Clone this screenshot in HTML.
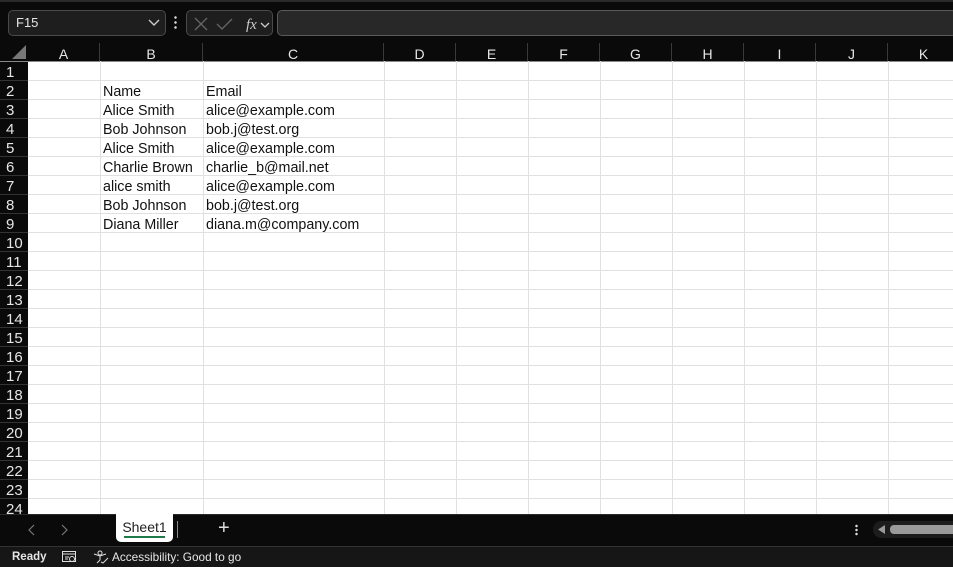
<!DOCTYPE html>
<html><head><meta charset="utf-8"><style>
*{margin:0;padding:0;box-sizing:border-box}
body{width:953px;height:567px;overflow:hidden;background:#0a0a0a;font-family:"Liberation Sans",sans-serif;position:relative}
.abs{position:absolute}
.hl{position:absolute;left:28px;width:925px;height:1px;background:#e0e0e0}
.vl{position:absolute;top:61px;height:453px;width:1px;background:#e0e0e0}
.ch{position:absolute;top:43px;height:18px;color:#e6e6e6;font-size:14px;text-align:center;line-height:22px;border-right:1px solid #3a3a3a}
.rh{position:absolute;left:0;width:28px;height:19px;color:#e6e6e6;font-size:15px;line-height:21px;padding-left:6px;border-bottom:1px solid #333}
.c{position:absolute;font-size:14.3px;color:#111;line-height:19px;white-space:nowrap}
</style></head><body>
<div class="abs" style="left:0;top:0;width:953px;height:2px;background:#2a2a2a"></div>
<div class="abs" style="left:8px;top:10px;width:158px;height:26px;border:1px solid #4a4a4a;border-radius:5px;background:#1e1e1e;color:#e6e6e6;font-size:13px;line-height:24px;padding-left:7px">F15
<svg class="abs" style="left:139px;top:8px" width="12" height="8"><path d="M1 1l5 5 5-5" stroke="#ccc" fill="none" stroke-width="1.4"/></svg></div>
<div class="abs" style="left:174px;top:15px;width:3px;height:14px;background:radial-gradient(circle,#ddd 1px,transparent 1.5px) 0 0/3px 5px"></div>
<div class="abs" style="left:186px;top:10px;width:87px;height:26px;border:1px solid #4a4a4a;border-radius:5px;background:#1e1e1e">
<svg class="abs" style="left:6px;top:5px" width="80" height="16"><path d="M2 2l12 12M14 2L2 14" stroke="#666" stroke-width="1.3"/><path d="M24 8l5 5 10-10" stroke="#666" fill="none" stroke-width="1.3"/><text x="53" y="13" fill="#ccc" font-family="Liberation Serif" font-style="italic" font-size="15">fx</text><path d="M68 7l4 4 4-4" stroke="#ccc" fill="none" stroke-width="1.3"/></svg></div>
<div class="abs" style="left:277px;top:10px;width:680px;height:26px;border:1px solid #5a5a5a;border-radius:5px;background:#282828"></div>
<svg class="abs" style="left:12px;top:45px" width="14" height="14"><path d="M14 0V14H0Z" fill="#777"/></svg>
<div class="abs" style="left:0;top:61px;width:953px;height:1px;background:#888"></div>
<div class="ch" style="left:28px;width:72px">A</div>
<div class="ch" style="left:100px;width:103px">B</div>
<div class="ch" style="left:203px;width:181px">C</div>
<div class="ch" style="left:384px;width:72px">D</div>
<div class="ch" style="left:456px;width:72px">E</div>
<div class="ch" style="left:528px;width:72px">F</div>
<div class="ch" style="left:600px;width:72px">G</div>
<div class="ch" style="left:672px;width:72px">H</div>
<div class="ch" style="left:744px;width:72px">I</div>
<div class="ch" style="left:816px;width:72px">J</div>
<div class="ch" style="left:888px;width:72px">K</div>
<div class="abs" style="left:28px;top:62px;width:925px;height:452px;background:#fff"></div>
<div id="lines"></div>
<script>
var h='';
for(var i=1;i<=24;i++){var y=61+i*19;h+='<div class="hl" style="top:'+(y)+'px"></div>';
h+='<div class="rh" style="top:'+(y-19+1)+'px">'+i+'</div>';}
[100,203,384,456,528,600,672,744,816,888].forEach(function(x){h+='<div class="vl" style="left:'+x+'px"></div>'});
var d=[["Name","Email"],["Alice Smith","alice@example.com"],["Bob Johnson","bob.j@test.org"],["Alice Smith","alice@example.com"],["Charlie Brown","charlie_b@mail.net"],["alice smith","alice@example.com"],["Bob Johnson","bob.j@test.org"],["Diana Miller","diana.m@company.com"]];
d.forEach(function(r,k){var y=83+k*19;h+='<div class="c" style="left:103px;top:'+y+'px">'+r[0]+'</div><div class="c" style="left:206px;top:'+y+'px">'+r[1]+'</div>'});
document.getElementById('lines').innerHTML=h;
</script>
<div class="abs" style="left:0;top:514px;width:953px;height:32px;background:#0a0a0a;border-top:1px solid #2a2a2a"></div>
<svg class="abs" style="left:27px;top:523px" width="45" height="14"><path d="M7 2L2 7l5 5" stroke="#777" fill="none" stroke-width="1.2"/><path d="M35 2l5 5-5 5" stroke="#777" fill="none" stroke-width="1.2"/></svg>
<div class="abs" style="left:116px;top:514px;width:57px;height:28px;background:#fff;border-radius:0 0 5px 5px;font-size:14px;color:#222;text-align:center;line-height:26px">Sheet1</div>
<div class="abs" style="left:124px;top:536px;width:41px;height:2px;background:#1e7a46"></div>
<div class="abs" style="left:177px;top:521px;width:1px;height:17px;background:#888"></div>
<div class="abs" style="left:218px;top:517px;color:#ddd;font-size:20px">+</div>
<div class="abs" style="left:855px;top:524px;width:3px;height:12px;background:radial-gradient(circle,#ddd 1px,transparent 1.5px) 0 0/3px 4px"></div>
<div class="abs" style="left:873px;top:521px;width:80px;height:17px;background:#1c1c1c;border-radius:8px 0 0 8px"></div>
<svg class="abs" style="left:878px;top:525px" width="8" height="9"><path d="M7 0V9L0 4.5Z" fill="#999"/></svg>
<div class="abs" style="left:890px;top:525px;width:63px;height:9px;background:#9a9a9a;border-radius:4px 0 0 4px"></div>
<div class="abs" style="left:0;top:546px;width:953px;height:21px;background:#161616;border-top:1px solid #333;color:#e6e6e6;font-size:11.5px;font-weight:bold;line-height:20px">
<span class="abs" style="left:12px">Ready</span>
<svg class="abs" style="left:62px;top:4px" width="14" height="12"><rect x="0.5" y="0.5" width="13" height="10" fill="none" stroke="#ddd"/><path d="M0 3H14M3 6H7M3 8H6" stroke="#ddd"/><circle cx="10" cy="8" r="2.5" fill="#161616" stroke="#ddd"/></svg>
<svg class="abs" style="left:93px;top:3px" width="16" height="14"><circle cx="7" cy="3" r="2" fill="none" stroke="#ddd"/><path d="M1 4l6 2 6-2M7 6v4l-3 3M8 12l2 1 5-5" stroke="#ddd" fill="none"/></svg>
<span class="abs" style="left:112px;font-weight:normal;font-size:11.8px">Accessibility: Good to go</span></div>
</body></html>
